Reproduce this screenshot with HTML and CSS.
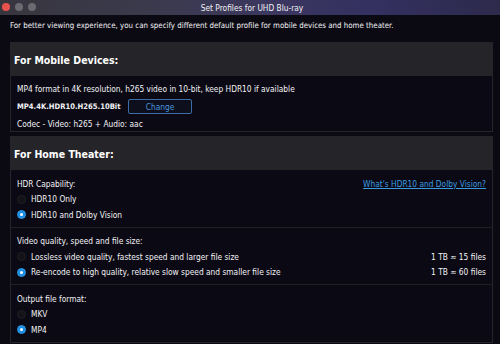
FILE: index.html
```html
<!DOCTYPE html>
<html>
<head>
<meta charset="utf-8">
<link rel="stylesheet" href="styles.css">
</head>
<body>
<div class="window">
  <div class="titlebar">
    <div class="lights"><span class="light red"></span><span class="light gray"></span><span class="light gray"></span></div>
    <div class="title">Set Profiles for UHD Blu-ray</div>
  </div>
  <div class="intro">For better viewing experience, you can specify different default profile for mobile devices and home theater.</div>

  <div class="panel mobile">
    <div class="panel-head">For Mobile Devices:</div>
    <div class="panel-body">
      <div class="line">MP4 format in 4K resolution, h265 video in 10-bit, keep HDR10 if available</div>
      <div class="line profile-row"><span class="profile">MP4.4K.HDR10.H265.10Bit</span><button class="change">Change</button></div>
      <div class="line">Codec - Video: h265 + Audio: aac</div>
    </div>
  </div>

  <div class="panel theater">
    <div class="panel-head">For Home Theater:</div>
    <div class="section">
      <div class="row"><span class="label">HDR Capability:</span><a class="link" href="#">What's HDR10 and Dolby Vision?</a></div>
      <div class="row radio-row"><span class="radio"></span><span>HDR10 Only</span></div>
      <div class="row radio-row"><span class="radio on"></span><span>HDR10 and Dolby Vision</span></div>
    </div>
    <div class="section">
      <div class="row"><span class="label">Video quality, speed and file size:</span></div>
      <div class="row radio-row"><span class="radio"></span><span class="grow">Lossless video quality, fastest speed and larger file size</span><span class="val">1 TB ≈ 15 files</span></div>
      <div class="row radio-row"><span class="radio on"></span><span class="grow">Re-encode to high quality, relative slow speed and smaller file size</span><span class="val">1 TB ≈ 60 files</span></div>
    </div>
    <div class="section last">
      <div class="row"><span class="label">Output file format:</span></div>
      <div class="row radio-row"><span class="radio"></span><span>MKV</span></div>
      <div class="row radio-row"><span class="radio on"></span><span>MP4</span></div>
    </div>
  </div>
</div>
</body>
</html>
```

FILE: styles.css
```css
* { box-sizing: border-box; }
html, body { margin: 0; padding: 0; }
body {
  width: 500px;
  height: 344px;
  overflow: hidden;
  background: #0b0a13;
  font-family: "DejaVu Sans Condensed", "DejaVu Sans", sans-serif;
  font-stretch: condensed;
  color: #f2f2f4;
  font-size: 8.3px;
}
.window { width: 500px; height: 344px; overflow: hidden; padding-right: 7px; }
.titlebar {
  position: relative;
  height: 15px;
  margin-right: -7px;
  background: linear-gradient(90deg, #37363f 0%, #3b3a4c 30%, #3b3760 55%, #343060 75%, #2d2a4c 100%);
  display: flex;
  align-items: center;
  justify-content: center;
}
.lights { position: absolute; left: 2px; top: 3px; display: flex; gap: 5px; }
.light { width: 8px; height: 8px; border-radius: 50%; display: block; }
.red { background: #e9524c; }
.gray { background: #6a6a70; }
.title { font-size: 8.3px; color: #f0f0f4; padding-top: 1px; padding-left: 4px; }
.intro { padding: 6px 0 0 10px; height: 27px; font-size: 7.85px; }
.panel {
  margin-left: 10px;
  border: 1px solid #24242a;
  background: #0b0a14;
}
.panel-head {
  background: #252529;
  height: 33px;
  display: flex;
  align-items: center;
  padding-left: 3px;
  font-weight: bold;
  font-size: 10.5px;
  color: #ffffff;
}
.panel-body { padding: 4px 0 0 6px; height: 55px; }
.line { height: 17.5px; display: flex; align-items: center; }
.profile { font-weight: bold; width: 111px; font-size: 7.6px; }
.change {
  width: 64px;
  height: 15px;
  background: #0d0f1c;
  border: 1px solid #3d6ba8;
  border-radius: 2px;
  color: #4a95dc;
  font-family: inherit;
  font-stretch: condensed;
  font-size: 8.3px;
  padding: 0;
  margin-top: 1px;
}
.theater { margin-top: 4px; }
.section { padding: 6px 6px 4px 6px; border-bottom: 1px solid #1f1f26; }
.section.last { border-bottom: none; }
.row { display: flex; align-items: center; height: 15.5px; }
.label { flex: 1; }
.link { color: #3c9be0; text-decoration: underline; }
.radio-row { gap: 5px; }
.radio {
  width: 9px; height: 9px; border-radius: 50%;
  background: #131318;
  border: 1px solid #1f1f26;
  flex: none;
  position: relative;
}
.radio.on { background: #1d8de4; border-color: #2a96e6; }
.radio.on::after {
  content: ""; position: absolute; left: 2px; top: 2px;
  width: 3px; height: 3px; border-radius: 50%; background: #fff;
}
.grow { flex: 1; }
.val { text-align: right; }
```
